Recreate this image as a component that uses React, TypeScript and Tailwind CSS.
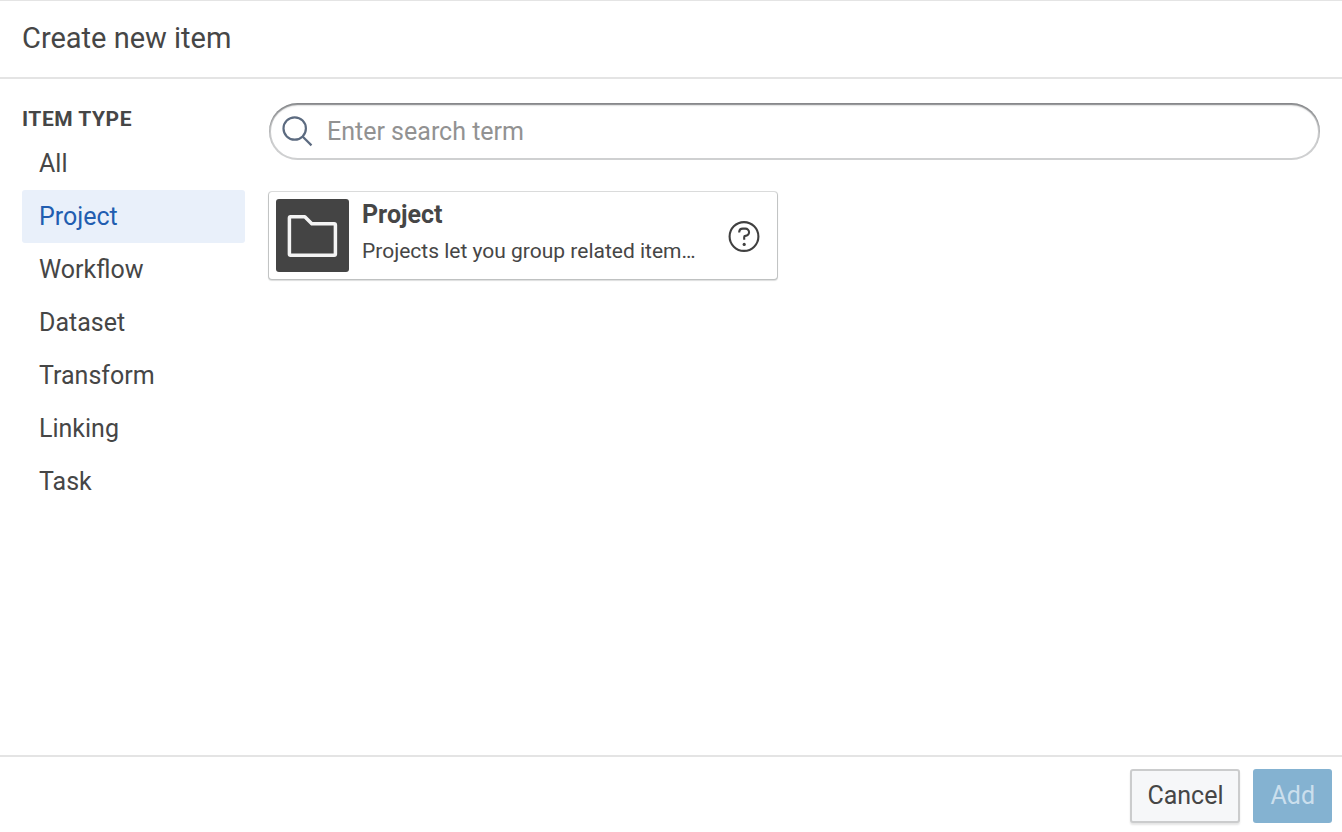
import { useState } from "react";

const itemTypes = ["All", "Project", "Workflow", "Dataset", "Transform", "Linking", "Task"];

function SearchIcon() {
  return (
    <svg aria-hidden="true" className="size-8 shrink-0" viewBox="0 0 32 32" fill="none" stroke="#5c6b80" strokeWidth="2.2">
      <circle cx="13.7" cy="12.5" r="11.2" />
      <path d="M21.3 20.3 30.5 29.4" />
    </svg>
  );
}

function FolderIcon() {
  return (
    <svg aria-hidden="true" className="size-[73px] shrink-0 rounded-[3px] bg-[#444444]" viewBox="0 0 73 73" fill="none">
      <path
        d="M14.6 17.7H28.8L35.8 24.7H58.2Q59.4 24.7 59.4 25.9V55Q59.4 56.2 58.2 56.2H14.6Q13.4 56.2 13.4 55V18.9Q13.4 17.7 14.6 17.7Z"
        stroke="#f4f4f4"
        strokeWidth="3.5"
        strokeLinejoin="round"
      />
    </svg>
  );
}

function HelpIcon() {
  return (
    <svg aria-hidden="true" className="size-8" viewBox="0 0 32 32" fill="none" stroke="#404040" strokeWidth="2.1">
      <circle cx="16" cy="16.5" r="14.4" />
      <path d="M11.2 12.6V12A3.6 3.6 0 0 1 14.8 8.6H17.4A3.6 3.6 0 0 1 17.4 15.9Q16.2 15.9 16.2 17.1V19.7" />
      <circle cx="16.2" cy="24.4" r="1.6" fill="#404040" stroke="none" />
    </svg>
  );
}

export default function App() {
  const [selected, setSelected] = useState("Project");
  const [term, setTerm] = useState("");

  return (
    <div className="flex min-h-screen flex-col border-t border-[#e4e4e4] bg-white font-[Roboto,sans-serif] text-[#464646]">
      <header className="border-b-2 border-[#e4e4e4] px-[22px] pt-[17px] pb-[19px]">
        <h1 className="text-[29px] leading-10">Create new item</h1>
      </header>

      <main className="flex flex-1 gap-6 px-[22px] pt-6">
        <nav aria-labelledby="item-type" className="w-[223px] shrink-0">
          <h2 id="item-type" className="text-[21px] leading-8 font-bold tracking-wide">ITEM TYPE</h2>
          <ul className="pt-[2px]">
            {itemTypes.map((type) => (
              <li key={type}>
                <button
                  type="button"
                  aria-pressed={selected === type}
                  onClick={() => setSelected(type)}
                  className={
                    selected === type
                      ? "block w-full rounded-[3px] bg-[#e9f0fa] px-[17px] pt-[11px] pb-[10px] text-left text-[25px] leading-8 text-[#215db0]"
                      : "block w-full rounded-[3px] px-[17px] pt-[11px] pb-[10px] text-left text-[25px] leading-8"
                  }
                >
                  {type}
                </button>
              </li>
            ))}
          </ul>
        </nav>

        <section className="min-w-0 flex-1">
          <label className="flex h-[57px] items-center gap-3.5 rounded-full px-3 shadow-[inset_0_0_0_2px_rgba(17,20,24,0.2),inset_0_2px_2px_rgba(17,20,24,0.4)]">
            <SearchIcon />
            <input
              type="text"
              aria-label="Search items"
              placeholder="Enter search term"
              value={term}
              onChange={(event) => setTerm(event.target.value)}
              className="min-w-0 flex-1 bg-transparent text-[25px] leading-8 outline-none placeholder:text-[#929292]"
            />
          </label>

          <div className="grid grid-cols-2 gap-9 pt-8">
            <article className="flex items-center gap-[13px] rounded-[3px] py-[7px] pr-[17px] pl-[7px] shadow-[0_0_0_1px_rgba(17,20,24,0.14),0_1px_1px_1px_rgba(17,20,24,0.14)]">
              <FolderIcon />
              <div className="min-w-0 flex-1 self-start">
                <h3 className="text-[25px] leading-8 font-bold">Project</h3>
                <p className="truncate pt-1 text-[21px] leading-8">Projects let you group related item…</p>
              </div>
              <button type="button" aria-label="About projects" className="ml-2">
                <HelpIcon />
              </button>
            </article>
          </div>
        </section>
      </main>

      <footer className="flex justify-end gap-[13px] border-t-2 border-[#e4e4e4] px-2.5 pt-3 pb-[9px]">
        <button
          type="button"
          className="h-[54px] rounded-[3px] border-2 border-[#cbcccd] bg-[#f6f7f9] px-[15px] text-[25px] leading-8 shadow-[0_2px_2px_#e5e5e5]"
        >
          Cancel
        </button>
        <button type="button" disabled className="h-[54px] rounded-[3px] bg-[#84b2d1] px-[17px] text-[25px] leading-8 text-[#cbdfed]">
          Add
        </button>
      </footer>
    </div>
  );
}
